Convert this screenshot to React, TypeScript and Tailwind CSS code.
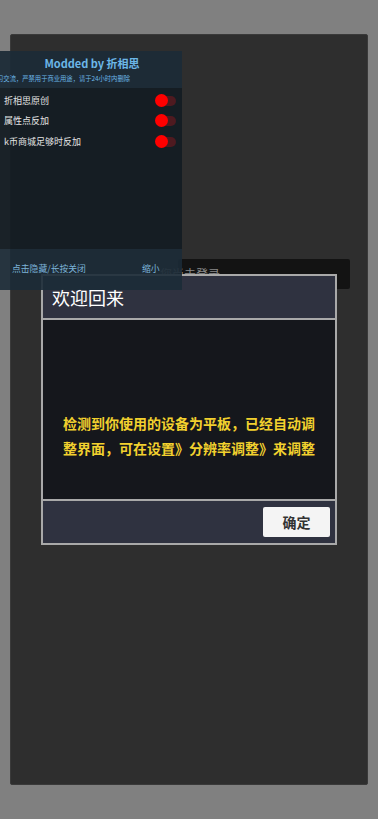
import React from "react";

const cjk = { fontFamily: '"Noto Sans CJK SC", "Noto Sans", sans-serif' };

function Toggle() {
  return (
    <div className="relative w-[22px] h-[13px]">
      <div className="absolute left-[6px] top-[2px] w-[15px] h-[10px] rounded-full bg-[#4e1a20]" />
      <div className="absolute left-0 top-0 w-[13px] h-[13px] rounded-full bg-[#ff0000]" />
    </div>
  );
}

export default function App() {
  const rows = ["折相思原创", "属性点反加", "k币商城足够时反加"];
  return (
    <div className="relative w-[378px] h-[819px] bg-[#808080] overflow-hidden" style={cjk}>
      {/* main dark panel */}
      <div className="ml-[10px] mt-[34px] w-[358px] h-[751px] bg-[#2e2e2e] rounded-[2px] border border-[#3a3a3a] pt-[224px] pl-[167px]">
        <div className="w-[172px] h-[30px] bg-[#131313] rounded-[2px] flex items-center pl-[2px]">
          <span className="text-[12px] text-[#8a8a8a] -ml-[20px]">您尚未登录</span>
        </div>
      </div>

      {/* dialog */}
      <div className="absolute left-[41px] top-[274px] w-[296px] h-[271px] border-2 border-[#a9a9a9] bg-[#a9a9a9] flex flex-col gap-[2px]">
        <div className="h-[42px] bg-[#2f3240] flex items-center pl-[9px]">
          <span className="text-[18px] text-white leading-none">欢迎回来</span>
        </div>
        <div className="flex-1 bg-[#15171c] flex items-center justify-center pt-[52px]">
          <p className="w-[254px] text-[14px] font-bold leading-[25px] text-[#f2d12e] text-center">
            检测到你使用的设备为平板，已经自动调整界面，可在设置》分辨率调整》来调整
          </p>
        </div>
        <div className="h-[42px] bg-[#2f3240] flex items-center justify-end pr-[5px]">
          <button className="w-[67px] h-[30px] bg-[#f4f4f4] rounded-[2px] text-[14px] font-bold text-[#333]">确定</button>
        </div>
      </div>

      {/* mod menu overlay */}
      <div className="absolute left-0 top-[51px] w-[182px] h-[239px] flex flex-col">
        <div className="h-[37px] bg-[#1c2b37]/95 flex flex-col items-center pt-[5px]">
          <div className="text-[11px] font-bold text-[#6cb7e8] leading-[15px] ml-[2px]">Modded by 折相思</div>
          <div className="w-full overflow-hidden flex justify-end pr-[52px] mt-[3px]">
            <span className="text-[6.3px] text-[#6cb7e8] whitespace-nowrap leading-[9px]">仅供学习交流，严禁用于商业用途，请于24小时内删除</span>
          </div>
        </div>
        <div className="h-[161px] bg-[#141c23]/95 flex flex-col pt-[2px]">
          {rows.map((r) => (
            <div key={r} className="h-[20.5px] flex items-center justify-between pl-[4px] pr-[5px]">
              <span className="text-[9px] text-[#e4e4e4]">{r}</span>
              <Toggle />
            </div>
          ))}
        </div>
        <div className="flex-1 bg-[#1c2b37]/90 flex items-center pl-[12px] pb-[2px]">
          <span className="text-[8.8px] text-[#7cb3d9] w-[130px]">点击隐藏/长按关闭</span>
          <span className="text-[8.8px] text-[#7cb3d9]">缩小</span>
        </div>
      </div>
    </div>
  );
}
